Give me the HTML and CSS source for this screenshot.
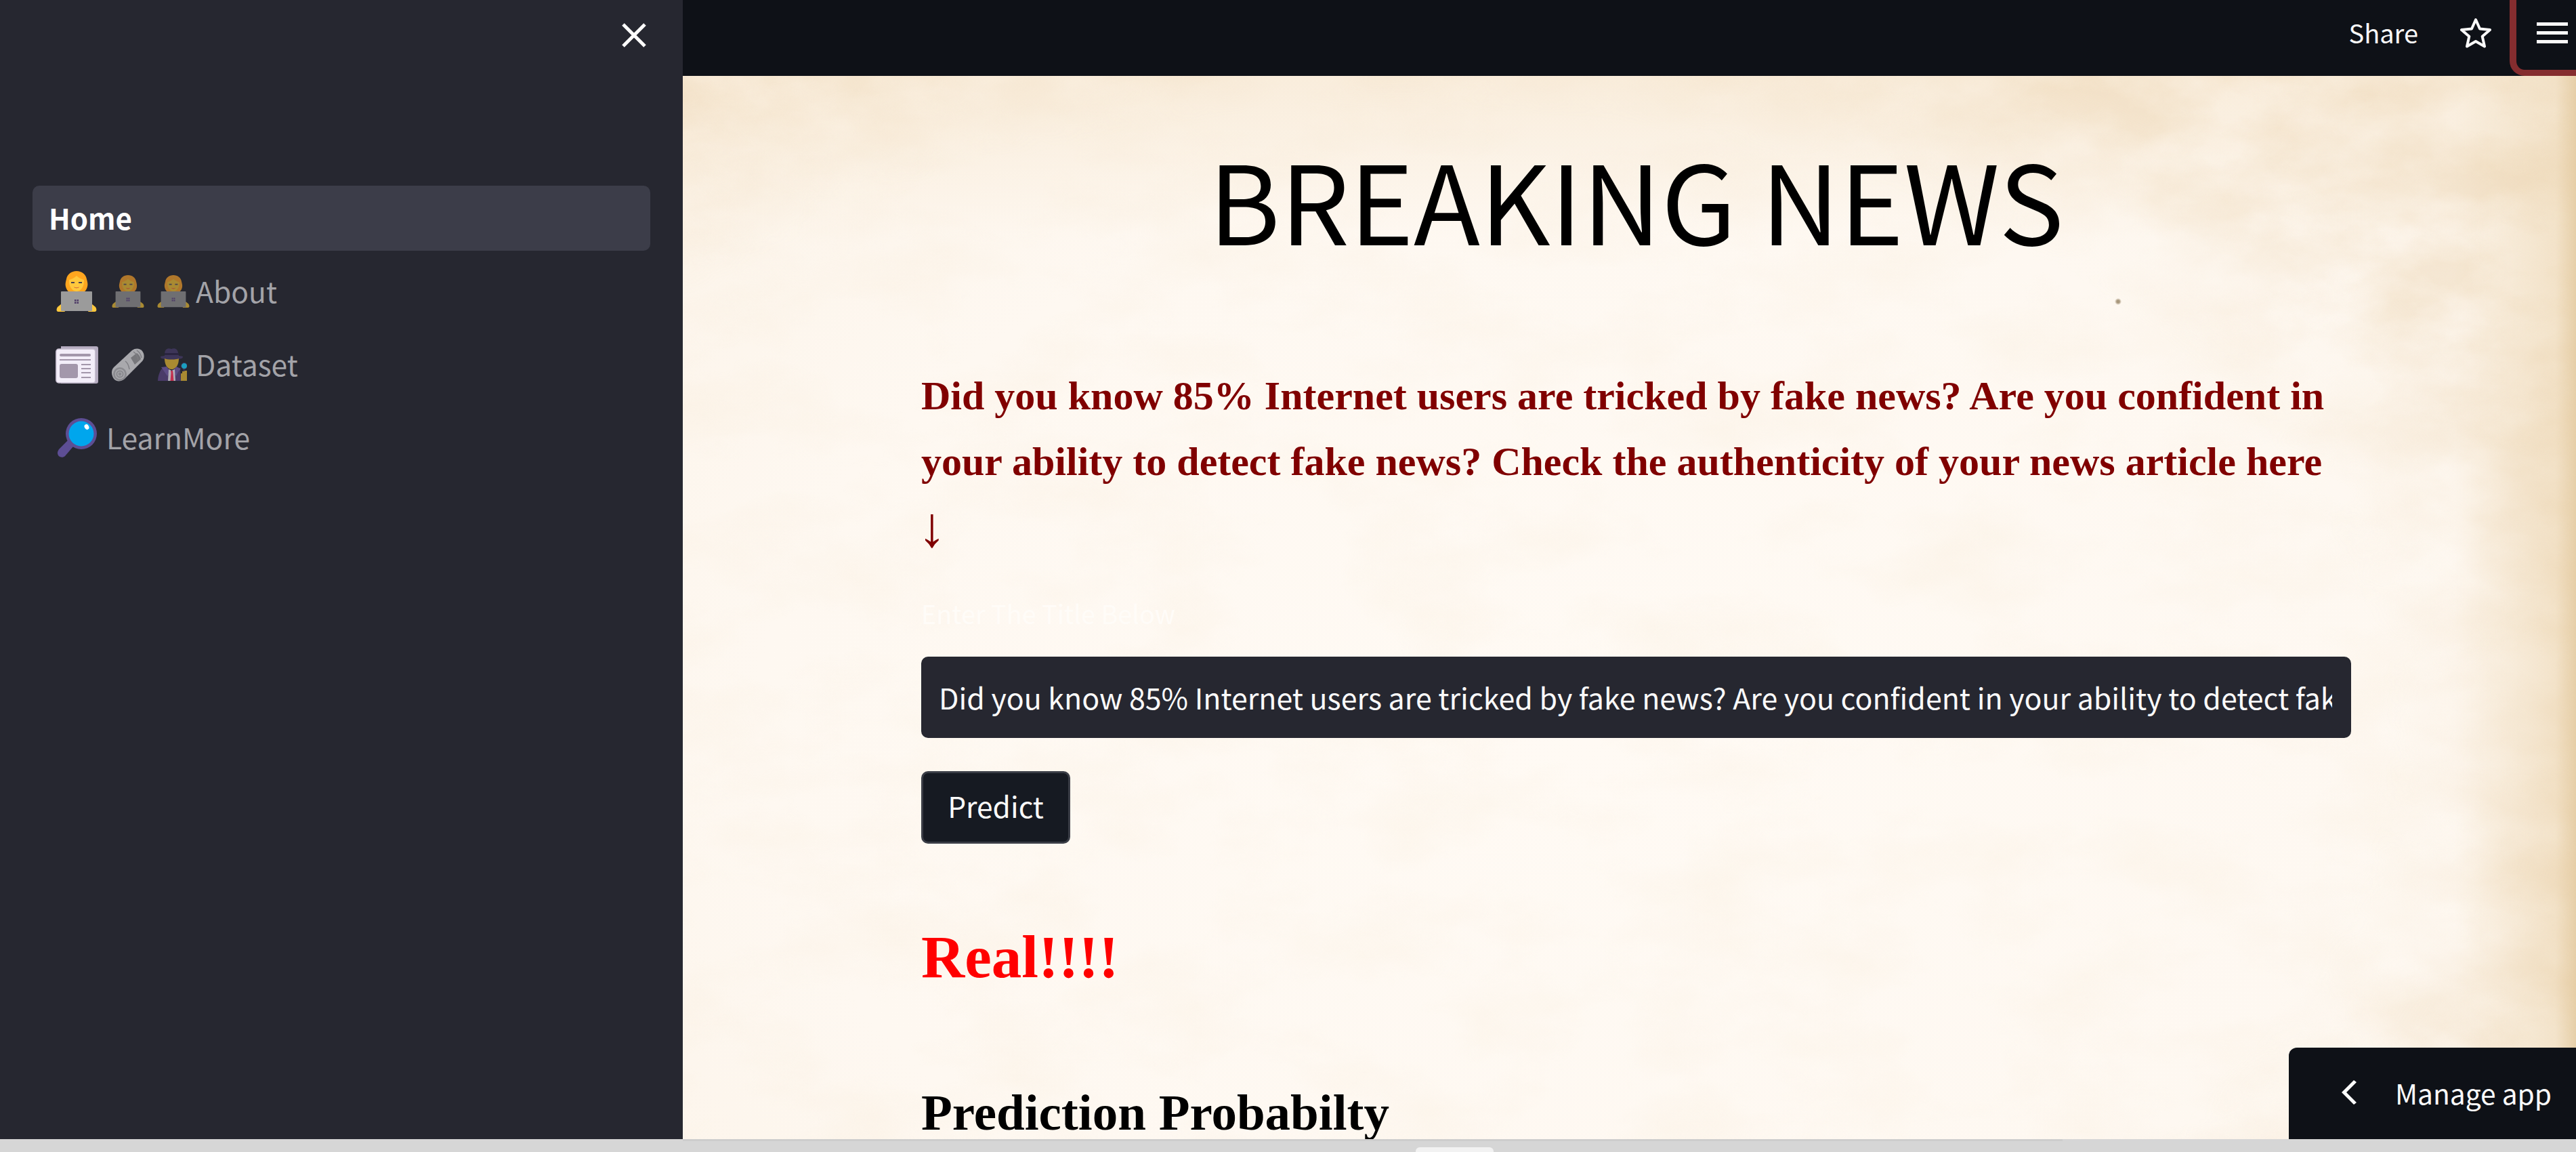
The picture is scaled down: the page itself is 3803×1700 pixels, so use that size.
FILE: index.html
```html
<!doctype html>
<html lang="en-us">
  <head>
    <meta charset="utf-8" />
    <meta name="viewport" content="width=device-width" />
    <title>Breaking News</title>
    <link rel="stylesheet" href="styles.css">
  </head>

  <body>
    <svg class="defs" width="0" height="0" aria-hidden="true">
      <symbol id="technologist" viewBox="0 0 60 60">
        <path class="hair" d="M30 0c-8 0-14 5-15 12-1 4-2 7-1 11 1 4 3 7 6 8h20c3-1 5-4 6-8 1-4 0-7-1-11C44 5 38 0 30 0z" />
        <path class="skin" d="M30 7c-3 3-7 5-11 6-1 8 4 17 11 17s12-9 11-17c-4-1-8-3-11-6z" />
        <path class="eye" d="M22 16h5v2h-5zM33 16h5v2h-5z" />
        <path class="mouth" d="M26 23c2 2 6 2 8 0-1 3-7 3-8 0z" />
        <path class="skin-hand" d="M2 53l5-4 6 11H3c-3 0-3-4-1-7zM58 53l-5-4-6 11h10c3 0 3-4 1-7z" />
        <rect class="laptop" x="7" y="30" width="46" height="29" rx="1" />
        <path class="logo" d="M27 42h2.500v2.500H27zM30.500 42H33v2.500h-2.500zM27 45.500h2.500V48H27zM30.500 45.500H33V48h-2.500z" />
      </symbol>
      <symbol id="newspaper" viewBox="0 0 63 55">
        <path fill="#b5acc0" d="M8 0h52c2 0 3 1 3 3v49c0 2-1 3-3 3H8z" />
        <rect x="0.800" y="4" width="58" height="50" rx="4" fill="#f3eef9" stroke="#c4bccd" stroke-width="1.500" />
        <rect x="6" y="11" width="46" height="4" rx="2" fill="#a397ab" />
        <rect x="6" y="19" width="46" height="2" fill="#a397ab" />
        <rect x="6" y="26" width="27" height="21" rx="3" fill="#a397ab" />
        <path fill="#a397ab" d="M38 26h14v2H38zM38 32h14v2H38zM38 38h14v2H38zM38 45h14v2H38z" />
      </symbol>
      <symbol id="roll" viewBox="0 0 48 49">
        <path fill="#a9a9ad" d="M3 28L30 3c5-4 12-3 15 1s4 10 0 15L20 44c-5 5-12 6-16 2S-2 33 3 28z" />
        <path fill="#77777b" d="M28 14l9-7c3 2 5 5 6 9l-9 8z" />
        <path fill="none" stroke="#7d7d82" stroke-width="1.500" d="M20 19c3 2 5 6 6 12M32 5c3 2 6 7 7 12M37 3c3 2 6 6 7 11" />
        <circle cx="12" cy="38" r="10" fill="#8a8a8f" />
        <circle cx="12" cy="38" r="6.500" fill="none" stroke="#a9a9ad" stroke-width="1.500" />
        <circle cx="12" cy="38" r="3" fill="none" stroke="#a9a9ad" stroke-width="1.200" />
      </symbol>
      <symbol id="detective" viewBox="0 0 43 48">
        <path fill="#3d3558" d="M12 2c2-2 5-2 8-1 3-1 6-1 8 1 2 2 2 6 3 9H10c0-3 0-7 2-9z" />
        <path fill="#3d3558" d="M4 12c3-1 6-1 8-1h17c2 0 5 0 8 1 0 2-1 3-2 3-4 1-10 2-15 2s-10-1-14-2c-1 0-2-1-2-3z" />
        <path fill="#2a2440" d="M10 7h21v3H10z" />
        <path fill="#a98a32" d="M10 15c4 2 17 2 21 0 0 9-4 16-10.500 16S10 24 10 15z" />
        <path fill="#4a3b69" d="M5 31c3-1 5-2 8-3l7 5 7-5c2 1 4 2 6 3l1 17H0c0-6 2-12 5-17z" />
        <path fill="#5d4c85" d="M5 28l8-1 5 8-4 6-4-6zM34 30l-7-3-4 8 4 6 3-6z" />
        <path fill="#b3afba" d="M16 31l4.500 2 4.500-2 1 17H15z" />
        <path fill="#c2304f" d="M19 33h3l.5 3 1 12h-5l1-12z" />
        <path fill="#a98a32" d="M34 37h2v-3h3v-1h4v15h-9z" />
        <rect x="37.500" y="30" width="2" height="4" fill="#3d3558" />
        <circle cx="39" cy="26" r="4.500" fill="#1a9fc0" stroke="#3d3558" stroke-width="1" />
      </symbol>
      <symbol id="magnifier" viewBox="0 0 59 58">
        <path fill="#5d4e94" d="M4 45l12-12c2-1 7 3 8 6v3L12 56c-3 3-8 2-10-1s-1-7 2-10z" />
        <circle cx="36" cy="23" r="23" fill="#5d4e94" />
        <circle cx="36" cy="23" r="18.500" fill="#00a6ed" />
        <ellipse cx="44" cy="13" rx="3.200" ry="4" fill="#fff" transform="rotate(-30 44 13)" />
      </symbol>
    </svg>

    <div class="app">
      <aside class="sidebar">
        <div class="sidebar-head">
          <svg class="close-icon" viewBox="0 0 36 36" aria-hidden="true">
            <path d="M2 2l32 32M34 2L2 34" />
          </svg>
        </div>
        <nav class="nav">
          <a class="nav-link active">Home</a>
          <a class="nav-link">
            <svg class="emoji bright big"><use href="#technologist" /></svg>
            <svg class="emoji dim small"><use href="#technologist" /></svg>
            <svg class="emoji dim small third"><use href="#technologist" /></svg>
            <span class="nav-label about">About</span>
          </a>
          <a class="nav-link">
            <svg class="emoji news"><use href="#newspaper" /></svg>
            <svg class="emoji roll"><use href="#roll" /></svg>
            <svg class="emoji sleuth"><use href="#detective" /></svg>
            <span class="nav-label dataset">Dataset</span>
          </a>
          <a class="nav-link">
            <svg class="emoji lens"><use href="#magnifier" /></svg>
            <span class="nav-label learn">LearnMore</span>
          </a>
        </nav>
      </aside>

      <div class="main">
        <header class="topbar">
          <span class="share">Share</span>
          <svg class="star-icon" viewBox="0 0 46 46" aria-hidden="true">
            <path d="M23 3l6 13.500 15 1.500-11.300 9.800 3.300 14.700-13-7.600-13 7.600 3.300-14.700L2 18l15-1.500z" />
          </svg>
          <div class="menu-box">
            <span class="menu-bar"></span>
            <span class="menu-bar"></span>
            <span class="menu-bar"></span>
          </div>
        </header>

        <section class="canvas">
          <svg class="paper" width="100%" height="100%" aria-hidden="true">
            <filter id="fibres">
              <feTurbulence type="fractalNoise" baseFrequency="0.005 0.009" numOctaves="6" seed="8" />
              <feColorMatrix values="0 0 0 0 0.85  0 0 0 0 0.68  0 0 0 0 0.45  1.500 0 0 0 -0.62" />
            </filter>
            <rect width="100%" height="100%" filter="url(#fibres)" />
          </svg>
          <svg class="paper-edge" width="100%" height="100%" aria-hidden="true">
            <filter id="stain">
              <feTurbulence type="fractalNoise" baseFrequency="0.006 0.01" numOctaves="6" seed="21" />
              <feColorMatrix values="0 0 0 0 0.80  0 0 0 0 0.60  0 0 0 0 0.36  2.200 0 0 0 -0.62" />
            </filter>
            <rect width="100%" height="100%" filter="url(#stain)" />
          </svg>

          <div class="content">
            <h1 class="title">BREAKING NEWS</h1>
            <p class="lead">Did you know 85% Internet users are tricked by fake news? Are you confident in your ability to detect fake news? Check the authenticity of your news article here <span class="lead-arrow">↓</span></p>
            <label class="field-label">Enter The Title Below</label>
            <div class="text-input">
              <div class="text-input-value">Did you know 85% Internet users are tricked by fake news? Are you confident in your ability to detect fake news? Check the authenticity of your news article here</div>
            </div>
            <button class="predict">Predict</button>
            <h2 class="verdict">Real!!!!</h2>
            <h3 class="prob-title">Prediction Probabilty</h3>
          </div>

          <div class="manage">
            <svg class="chevron" viewBox="0 0 24 36" aria-hidden="true">
              <path d="M19 0l4 3L8 18l15 15-4 3L1 18z" />
            </svg>
            <span>Manage app</span>
          </div>
        </section>
      </div>
    </div>

    <footer class="strip">
      <span class="strip-thumb"></span>
      <span class="strip-tab"></span>
    </footer>
  </body>
</html>
```
FILE: styles.css
```css
* {
  box-sizing: border-box;
}
html,
body {
  margin: 0;
  height: 100%;
  overflow: hidden;
}
body {
  width: 3803px;
  height: 1700px;
  background: #d6d6d6;
  font-family: "Noto Sans CJK SC", "Source Sans Pro", "Noto Sans", sans-serif;
}
.defs {
  display: block;
  height: 0;
}
.app {
  display: flex;
  height: 1681px;
}

/* sidebar */
.sidebar {
  width: 1008px;
  flex: none;
  background: #262730;
  padding: 0 48px;
}
.sidebar-head {
  display: flex;
  justify-content: flex-end;
  height: 274px;
  padding-top: 34px;
  padding-right: 6px;
}
.close-icon {
  width: 36px;
  height: 36px;
  fill: none;
  stroke: #fff;
  stroke-width: 5;
}
.nav {
  display: flex;
  flex-direction: column;
  gap: 12px;
}
.nav-link {
  display: flex;
  align-items: center;
  height: 96px;
  padding-left: 26px;
  border-radius: 10px;
  color: #a3a3a8;
  font-size: 42px;
}
.nav-link.active {
  background: #3c3d49;
  color: #fff;
  font-weight: 700;
  padding-left: 24px;
  padding-bottom: 3px;
}
.nav-label {
  padding-bottom: 3px;
  font-size: 42.600px;
}

/* emoji */
.emoji {
  flex: none;
  display: block;
}
.big {
  width: 60px;
  height: 60px;
  margin-left: 9px;
}
.small {
  width: 48px;
  height: 48px;
  margin-left: 22px;
}
.small.third {
  margin-left: 19px;
}
.news {
  width: 63px;
  height: 55px;
  margin-left: 8px;
}
.roll {
  width: 48px;
  height: 49px;
  margin-left: 20px;
}
.sleuth {
  width: 43px;
  height: 48px;
  margin-left: 20px;
}
.lens {
  width: 59px;
  height: 58px;
  margin-left: 10px;
}
.nav-label.about {
  margin-left: 9px;
}
.nav-label.dataset {
  margin-left: 13px;
}
.nav-label.learn {
  margin-left: 14px;
}
.bright {
  --hair: #ffa61f;
  --skin: #ffc83d;
  --hand: #ffc83d;
  --laptop: #9b9b9b;
}
.dim {
  --hair: #b0772b;
  --skin: #a98a32;
  --hand: #a98a32;
  --laptop: #6f6f72;
}
.hair {
  fill: var(--hair);
}
.skin {
  fill: var(--skin);
}
.skin-hand {
  fill: var(--hand);
}
.laptop {
  fill: var(--laptop);
}
.logo {
  fill: #4d3a66;
}
.eye {
  fill: #4a4350;
}
.mouth {
  fill: #b0263a;
}

/* top bar */
.main {
  flex: 1;
  min-width: 0;
  display: flex;
  flex-direction: column;
}
.topbar {
  flex: none;
  height: 112px;
  background: #0e1117;
  color: #fafafa;
  display: flex;
  align-items: center;
  justify-content: flex-end;
  font-size: 38px;
}
.share {
  margin-right: 62px;
  padding-bottom: 18px;
}
.star-icon {
  width: 46px;
  height: 46px;
  margin-right: 27px;
  margin-bottom: 14px;
  fill: none;
  stroke: #fafafa;
  stroke-width: 4;
  stroke-linejoin: round;
}
.menu-box {
  width: 98px;
  height: 112px;
  border: solid #852d2f;
  border-width: 0 0 9px 10px;
  border-bottom-left-radius: 22px;
  display: flex;
  flex-direction: column;
  gap: 8px;
  padding: 33px 12px 0 30px;
}
.menu-bar {
  display: block;
  height: 5px;
  background: #fafafa;
}

/* page body */
.canvas {
  flex: 1;
  position: relative;
  overflow: hidden;
  background:
    radial-gradient(circle at 2119px 333px, #a8977c 0, #a8977c 2px, transparent 5px),
    linear-gradient(to left, #e6cfa9 0, #f3e3ca 30px, rgba(248, 236, 219, 0) 180px),
    linear-gradient(to bottom, #f9eddc 0, rgba(250, 240, 226, 0) 240px),
    radial-gradient(ellipse at 48% 62%, #fffaf4 0, #fef8f1 60%, #fbf2e6 100%);
}
.paper {
  position: absolute;
  inset: 0;
  opacity: 0.16;
}
.paper-edge {
  position: absolute;
  inset: 0;
  opacity: 0.32;
  -webkit-mask-image: radial-gradient(ellipse 1800px 1150px at 38% 62%, transparent 80%, #000 100%);
  mask-image: radial-gradient(ellipse 1800px 1150px at 38% 62%, transparent 80%, #000 100%);
}
.content {
  position: relative;
  width: 2111px;
  margin-left: 352px;
}
.title {
  margin: 0;
  padding-top: 80px;
  text-align: center;
  font-size: 161px;
  font-weight: 400;
  line-height: 200px;
  color: #000;
}
.lead {
  margin: 0;
  padding-top: 144px;
  font-family: "Liberation Serif", "Times New Roman", serif;
  font-weight: 700;
  font-size: 60px;
  line-height: 97px;
  color: #800000;
}
.lead-arrow {
  font-size: 84px;
  font-weight: 400;
  line-height: 0;
  margin-left: -5px;
  vertical-align: -8px;
}
.field-label {
  display: block;
  margin-top: 56px;
  font-size: 37.800px;
  line-height: 44px;
  color: #fffcf8;
}
.text-input {
  margin-top: 42px;
  height: 120px;
  padding: 0 28px 3px 26px;
  display: flex;
  align-items: center;
  background: #262730;
  border-radius: 10px;
  color: #fafafa;
  font-size: 42.900px;
}
.text-input-value {
  width: 100%;
  overflow: hidden;
  white-space: nowrap;
}
.predict {
  display: block;
  margin-top: 49px;
  width: 220px;
  height: 107px;
  padding-bottom: 8px;
  background: #161a22;
  border: 3px solid #3a3d46;
  border-radius: 10px;
  color: #fafafa;
  font-family: inherit;
  font-size: 42.500px;
}
.verdict {
  margin: 0;
  padding-top: 117px;
  font-family: "Liberation Serif", "Times New Roman", serif;
  font-size: 89px;
  line-height: 100px;
  color: #f00;
}
.prob-title {
  margin: 0;
  padding-top: 135px;
  font-family: "Liberation Serif", "Times New Roman", serif;
  font-size: 75px;
  line-height: 90px;
  color: #000;
}
.manage {
  position: absolute;
  right: 0;
  bottom: 0;
  width: 424px;
  height: 135px;
  padding-bottom: 3px;
  background: #0e1117;
  border-top-left-radius: 12px;
  color: #fafafa;
  font-size: 40.700px;
  display: flex;
  align-items: center;
  padding-left: 77px;
  gap: 56px;
}
.chevron {
  width: 24px;
  height: 36px;
  fill: #fff;
}

/* bottom edge of the window */
.strip {
  position: relative;
  height: 19px;
  background: #d6d6d6;
}
.strip-thumb {
  position: absolute;
  left: 1008px;
  top: 0;
  width: 2037px;
  height: 3px;
  background: #cdcdcd;
}
.strip-tab {
  position: absolute;
  left: 2090px;
  top: 12px;
  width: 115px;
  height: 7px;
  background: #f2f2f2;
  border-radius: 6px 6px 0 0;
}
```
